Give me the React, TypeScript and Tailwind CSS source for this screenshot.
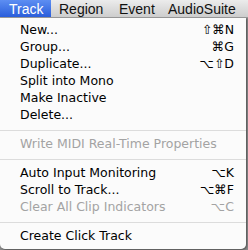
import React from "react";

type Item =
  | { kind: "item"; label: string; shortcut?: string; disabled?: boolean }
  | { kind: "sep" };

const items: Item[] = [
  { kind: "item", label: "New...", shortcut: "⇧⌘N" },
  { kind: "item", label: "Group...", shortcut: "⌘G" },
  { kind: "item", label: "Duplicate...", shortcut: "⌥⇧D" },
  { kind: "item", label: "Split into Mono" },
  { kind: "item", label: "Make Inactive" },
  { kind: "item", label: "Delete..." },
  { kind: "sep" },
  { kind: "item", label: "Write MIDI Real-Time Properties", disabled: true },
  { kind: "sep" },
  { kind: "item", label: "Auto Input Monitoring", shortcut: "⌥K" },
  { kind: "item", label: "Scroll to Track...", shortcut: "⌥⌘F" },
  { kind: "item", label: "Clear All Clip Indicators", shortcut: "⌥C", disabled: true },
  { kind: "sep" },
  { kind: "item", label: "Create Click Track" },
];

export default function App() {
  return (
    <div
      className="w-[248px] h-[250px] overflow-hidden bg-[#8a8a8a] relative"
      style={{ fontFamily: '"DejaVu Sans", "Liberation Sans", sans-serif' }}
    >
      <div
        className="h-[18px] flex items-stretch bg-gradient-to-b from-[#ececec] to-[#cdcdcd] border-b border-[#9a9a9a] text-[14px] text-[#111] leading-none"
        style={{ fontFamily: '"Liberation Sans", Arial, sans-serif' }}
      >
        <div className="w-[51px] pl-[9px] flex items-center bg-gradient-to-b from-[#5d8ef2] to-[#2a5ddb] text-white">
          Track
        </div>
        <div className="pl-[8px] w-[68px] flex items-center">Region</div>
        <div className="w-[49px] flex items-center">Event</div>
        <div className="flex items-center">AudioSuite</div>
      </div>
      <div className="w-[246px] h-[231px] bg-white/[0.97] rounded-b-[5px] pt-[4px] shadow-[1px_1px_2px_rgba(0,0,0,0.4)] text-[12.5px] leading-none">
        {items.map((it, i) =>
          it.kind === "sep" ? (
            <div key={i} className="h-[12px] flex items-center">
              <div className="h-px w-full bg-[#dcdcdc]" />
            </div>
          ) : (
            <div
              key={i}
              className={`h-[17px] flex items-center justify-between pl-[20px] pr-[12px] ${
                it.disabled ? "text-[#a3a3a3]" : "text-black"
              }`}
            >
              <span>{it.label}</span>
              {it.shortcut && <span>{it.shortcut}</span>}
            </div>
          )
        )}
      </div>
    </div>
  );
}
